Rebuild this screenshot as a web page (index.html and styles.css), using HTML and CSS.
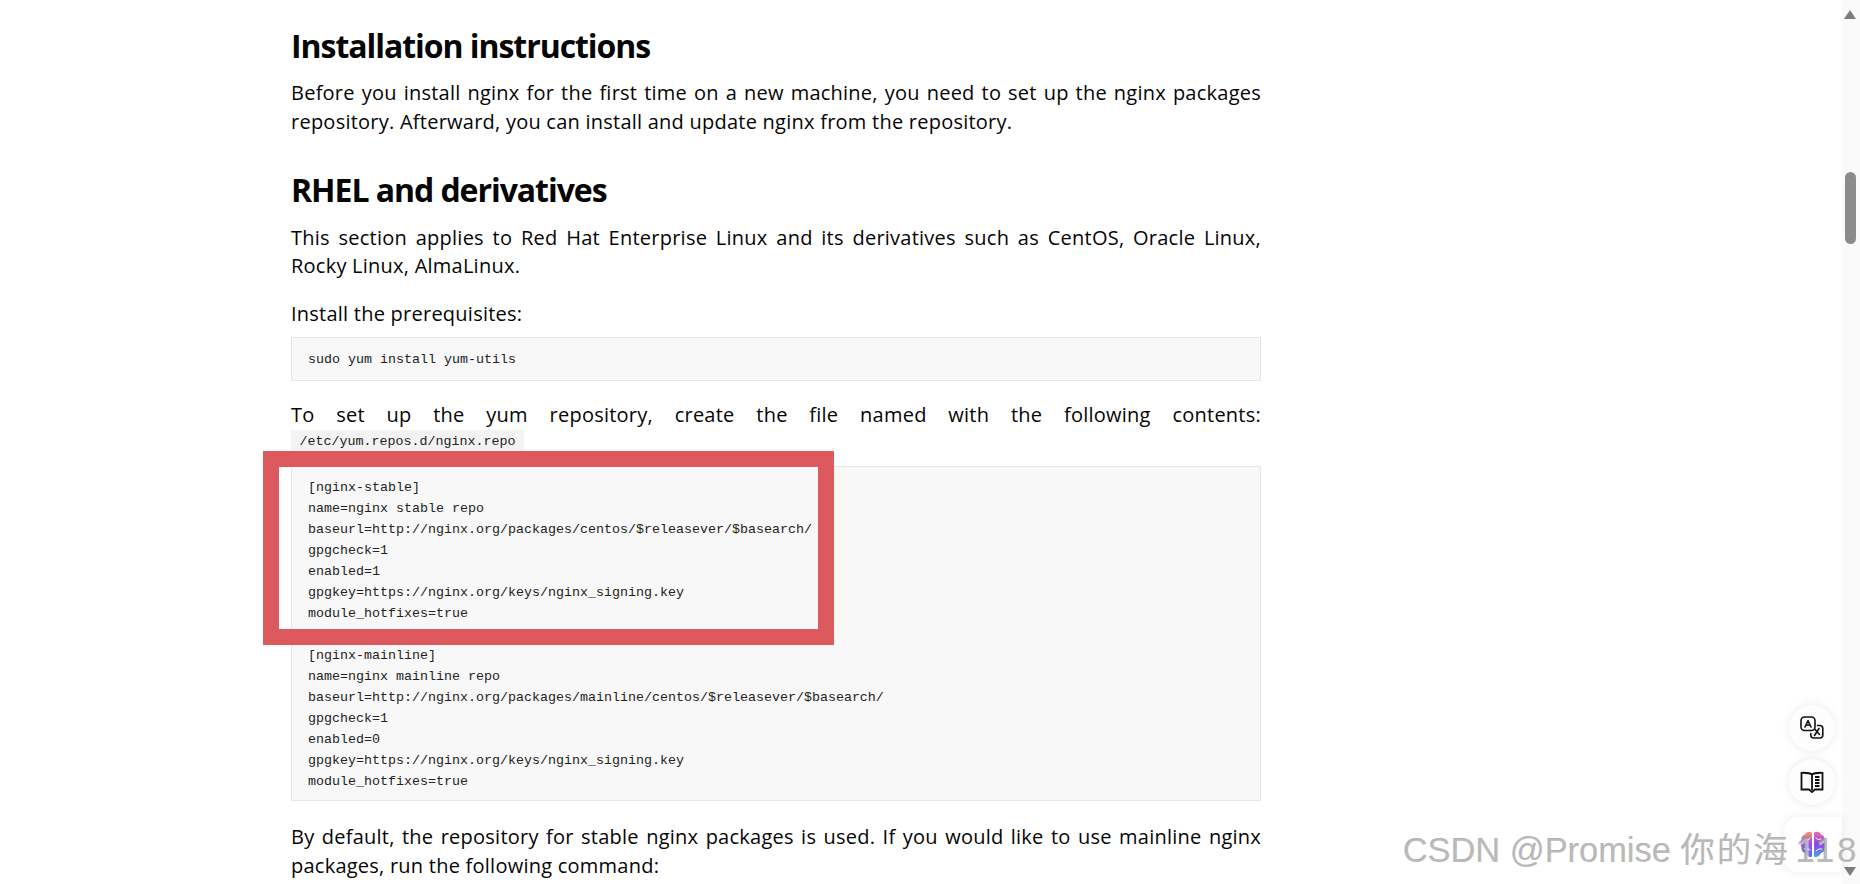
FILE: index.html
```html
<!DOCTYPE html>
<html lang="en">
<head>
<meta charset="utf-8">
<title>nginx: Linux packages</title>
<link rel="stylesheet" href="styles.css">
</head>
<body>
<main class="content">
  <h2 class="heading first">Installation instructions</h2>
  <p class="para">Before you install nginx for the first time on a new machine, you need to set up the nginx packages repository. Afterward, you can install and update nginx from the repository.</p>
  <h2 class="heading">RHEL and derivatives</h2>
  <p class="para">This section applies to Red Hat Enterprise Linux and its derivatives such as CentOS, Oracle Linux, Rocky Linux, AlmaLinux.</p>
  <p class="para">Install the prerequisites:</p>
  <pre class="code single">sudo yum install yum-utils</pre>
  <p class="para"><span class="full-line">To set up the yum repository, create the file named with the following contents:</span><code class="inline">/etc/yum.repos.d/nginx.repo</code></p>
  <pre class="code listing">[nginx-stable]
name=nginx stable repo
baseurl=http://nginx.org/packages/centos/$releasever/$basearch/
gpgcheck=1
enabled=1
gpgkey=https://nginx.org/keys/nginx_signing.key
module_hotfixes=true

[nginx-mainline]
name=nginx mainline repo
baseurl=http://nginx.org/packages/mainline/centos/$releasever/$basearch/
gpgcheck=1
enabled=0
gpgkey=https://nginx.org/keys/nginx_signing.key
module_hotfixes=true</pre>
  <p class="para">By default, the repository for stable nginx packages is used. If you would like to use mainline nginx packages, run the following command:</p>
</main>

<div class="highlight"></div>

<div class="scrollbar">
  <span class="arrow up"></span>
  <span class="thumb"></span>
  <span class="arrow down"></span>
</div>

<div class="fab fab-translate">
  <svg viewBox="0 0 24 24" width="24" height="24" fill="none" stroke="#111" stroke-width="1.6" stroke-linejoin="round" stroke-linecap="round">
    <rect x="1" y="1" width="14" height="13.500" rx="3.500"/>
    <path d="M5 11 8 4.500l3 6.500M6 9h4"/>
    <path d="M17.500 9.500h2.300a3 3 0 0 1 3 3v6.500a3 3 0 0 1-3 3h-6a3 3 0 0 1-3-3v-1.500"/>
    <path d="M14.500 19.500 19 12.500M15 13.500l4.500 5"/>
  </svg>
</div>
<div class="fab fab-book">
  <svg viewBox="0 0 24 24" width="24" height="24" fill="none" stroke="#111" stroke-width="1.8" stroke-linejoin="miter">
    <path d="M12 4.500C10 3 6 2.600 1.500 2.800v16.700h7.500l3 2.500 3-2.500h7.500V2.800C18 2.600 14 3 12 4.500Z"/>
    <path d="M12 4.500V20"/>
    <path d="M15 7h4.500M15 10h4.500M15 13h4.500M15 16h4.500"/>
  </svg>
</div>
<div class="fab-brain">
  <svg viewBox="0 0 32 32" width="32" height="32">
    <defs>
      <linearGradient id="brainLeft" x1="0" y1="0" x2="0" y2="1">
        <stop offset="0" stop-color="#f59a6b"/>
        <stop offset=".45" stop-color="#9a4fe0"/>
        <stop offset="1" stop-color="#5a6ff0"/>
      </linearGradient>
      <linearGradient id="brainRight" x1="0" y1="0" x2="0" y2="1">
        <stop offset="0" stop-color="#e86fb0"/>
        <stop offset=".5" stop-color="#8a45e6"/>
        <stop offset="1" stop-color="#46a6f0"/>
      </linearGradient>
    </defs>
    <path fill="url(#brainLeft)" d="M15 3.500c-3-1.500-6-.5-7 2-2.500.5-4 3-3.500 5.500-1.500 2-1.500 5 0 7-.5 3 1 5.500 3.500 6 1 3 4.500 5 7 3.500Z"/>
    <path fill="url(#brainRight)" d="M17 3.500c3-1.500 6-.5 7 2 2.500.5 4 3 3.500 5.500 1.500 2 1.500 5 0 7 .5 3-1 5.500-3.500 6-1 3-4.500 5-7 3.500Z"/>
    <path fill="none" stroke="#fff" stroke-width="1" stroke-linecap="round" d="M8 11c2 .5 3.500 0 5-2M7 20c2-1 4-.500 6 1M24 10c-2 1-4 .500-5-1M25 20c-2-.500-4 0-6 2"/>
  </svg>
</div>

<div class="watermark">CSDN @Promise <span class="watermark-cjk">你的海</span><span class="watermark-num">118</span></div>
</body>
</html>
```

FILE: styles.css
```css
html, body {
  margin: 0;
  height: 884px;
  overflow: hidden;
  background: #fff;
}

body {
  position: relative;
  font-family: "Open Sans", "Noto Sans", sans-serif;
  color: #050505;
}

.content {
  width: 970px;
  margin-left: 291px;
  padding-top: 26px;
}

.heading {
  margin: 34px 0 13.3px;
  font-size: 32px;
  line-height: 40px;
  font-weight: 700;
  letter-spacing: -1.05px;
}

.heading.first {
  margin-top: 0;
}

.para {
  margin: 0 0 8.5px;
  font-size: 20px;
  line-height: 28.5px;
  text-align: justify;
  letter-spacing: 0.24px;
}

.para + .para {
  margin-top: 19px;
}

.full-line {
  display: block;
  text-align-last: justify;
}

.code {
  margin: 0 0 20px;
  padding: 9px 16px;
  border: 1px solid #e6e6e6;
  background: #f8f8f8;
  font-family: "Liberation Mono", monospace;
  font-size: 13.33px;
  line-height: 21px;
  color: #222;
}

.code.single {
  padding: 11px 16px 10px;
}

.code.listing {
  margin-bottom: 22px;
  padding: 10px 16px 8px;
}

.inline {
  display: inline-block;
  margin-top: 1px;
  padding: 0 8.5px;
  background: #f3f3f3;
  font-family: "Liberation Mono", monospace;
  font-size: 13.33px;
  line-height: 23px;
  letter-spacing: 0;
  color: #222;
  vertical-align: top;
}

.highlight {
  position: absolute;
  left: 263px;
  top: 451px;
  width: 539px;
  height: 162px;
  border: 16px solid #dc595e;
}

.scrollbar {
  position: absolute;
  top: 0;
  right: 0;
  bottom: 0;
  width: 18px;
  background: #fafafa;
}

.thumb {
  position: absolute;
  top: 172px;
  left: 3px;
  width: 11px;
  height: 72px;
  border-radius: 6px;
  background: #8b8b8b;
}

.arrow {
  position: absolute;
  left: 2px;
  width: 0;
  height: 0;
  border-left: 6.5px solid transparent;
  border-right: 6.5px solid transparent;
}

.arrow.up {
  top: 10px;
  border-bottom: 9px solid #7c7c7c;
}

.arrow.down {
  top: 867px;
  border-top: 9px solid #7c7c7c;
}

.fab {
  position: absolute;
  left: 1789px;
  width: 46px;
  height: 46px;
  display: flex;
  align-items: center;
  justify-content: center;
  border-radius: 50%;
  background: #fdfdfd;
  box-shadow: 0 0 10px rgba(0, 0, 0, 0.09);
}

.fab-translate {
  top: 705px;
}

.fab-book {
  top: 759px;
}

.fab-brain {
  position: absolute;
  left: 1784px;
  top: 817px;
  width: 58px;
  height: 55px;
  display: flex;
  align-items: center;
  justify-content: center;
  border-radius: 14px 0 0 14px;
  background: #fff;
  box-shadow: 0 0 10px rgba(0, 0, 0, 0.08);
}

.watermark {
  position: absolute;
  left: 1403px;
  top: 830px;
  font-family: "Liberation Sans", "Noto Sans CJK SC", sans-serif;
  font-size: 34.4px;
  line-height: 40px;
  white-space: nowrap;
  color: rgba(165, 165, 165, 0.7);
  text-shadow: 1px 1px 0 rgba(255, 255, 255, 0.6), -0.5px -0.5px 0 rgba(130, 130, 130, 0.35);
}

.watermark-cjk {
  letter-spacing: 2px;
}

.watermark-num {
  margin-left: 6px;
  letter-spacing: 3px;
}
```
